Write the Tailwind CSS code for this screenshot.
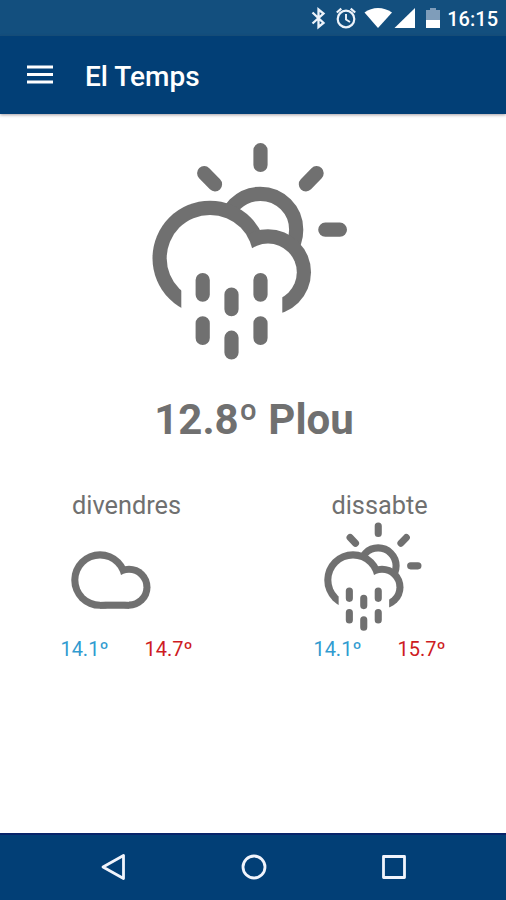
<!DOCTYPE html>
<html lang="ca">
<head>
    <meta charset="UTF-8">
    <meta name="viewport" content="width=device-width, initial-scale=1.0">
    <title>El Temps</title>
    <script src="https://cdn.jsdelivr.net/npm/@tailwindcss/browser@4"></script>
</head>
<body class="flex flex-col h-screen overflow-hidden bg-white font-['Roboto',sans-serif] text-[#707070]">
    <!-- Weather icons, shared by today and the forecast -->
    <svg class="hidden">
        <symbol id="rain" viewBox="0 0 220 240">
            <circle cx="120.300" cy="99.700" r="35.900" fill="none" stroke="currentColor" stroke-width="14.200" />
            <circle cx="70" cy="128.200" r="57.500" fill="currentColor" />
            <circle cx="128" cy="142.300" r="43" fill="currentColor" />
            <circle cx="70" cy="128.200" r="43.300" fill="white" />
            <circle cx="128" cy="142.300" r="28.800" fill="white" />
            <path d="M41.300 140H142.300V190H41.300Z" fill="white" />
            <g fill="none" stroke="currentColor" stroke-width="14.200" stroke-linecap="round">
                <path d="M120.500 20.200V34.900M64.200 43.200L75 54.300M176.600 43.200L165.900 54.300M185.300 99.700H199.900" />
                <path d="M62.700 150V164.700M120.500 150V164.700M91.500 164.500V179.200M62.700 193.300V208M120.500 193.300V208M91.500 207.700V222.400" />
            </g>
        </symbol>
        <symbol id="cloud" viewBox="0 0 220 240">
            <circle cx="70" cy="128.200" r="57.500" fill="currentColor" />
            <circle cx="128" cy="142.300" r="43" fill="currentColor" />
            <path d="M70 142H128V185.500H70Z" fill="currentColor" />
            <circle cx="70" cy="128.200" r="43.300" fill="white" />
            <circle cx="128" cy="142.300" r="28.800" fill="white" />
            <path d="M70 140H128V171.300H70Z" fill="white" />
        </symbol>
    </svg>

    <!-- Status bar -->
    <div class="flex items-center justify-end h-9 shrink-0 pr-2 bg-[#134f7e] text-white">
        <svg class="w-[137px] h-9" viewBox="310 0 137 36">
            <!-- Bluetooth -->
            <path d="M312.500 12.500L323.500 23L318.500 27V9.500L323.500 13.500L312.500 23.500" fill="none" stroke="#edf3fa" stroke-width="2.300" />
            <!-- Alarm -->
            <g fill="none" stroke="#edf3fa" stroke-width="2.200">
                <circle cx="346" cy="19" r="8.300" />
                <path d="M346 14V19.500L350 22" stroke-width="1.900" />
                <path d="M336.800 12.500L341.300 8.700M350.700 8.700L355.200 12.500" />
            </g>
            <!-- Wi-Fi -->
            <path d="M378 28L364.500 12.500Q370.500 8 378 8T392 12.500Z" fill="white" />
            <!-- Signal -->
            <path d="M394.500 28L415 8V28Z" fill="white" />
            <!-- Battery -->
            <path d="M426 20V10H430V8H436V10H440V20Z" fill="#7f9dba" />
            <path d="M426 20H440V28H426Z" fill="white" />
        </svg>
        <span class="pt-0.5 text-xl leading-9 font-medium">16:15</span>
    </div>

    <!-- App bar -->
    <div class="relative flex items-center gap-8 h-[78px] shrink-0 pl-[27px] bg-[#023f76] text-white shadow-[0_1px_3px_rgba(60,40,50,0.45)]">
        <svg class="w-[26px] h-5" viewBox="0 0 26 20">
            <path d="M0 2H26M0 9.500H26M0 17H26" stroke="white" stroke-width="3" />
        </svg>
        <h1 class="pt-1 text-[28px] font-medium">El Temps</h1>
    </div>

    <!-- Current weather -->
    <main class="flex-1">
        <div class="flex flex-col items-center pt-4">
            <svg class="w-[220px] h-60 -ml-[6px]"><use href="#rain" /></svg>
            <p class="mt-5 pl-0.5 text-[42px] leading-[60px] font-bold">12.8º Plou</p>
        </div>

        <!-- Forecast -->
        <div class="grid grid-cols-2 mt-10">
            <div class="flex flex-col items-center">
                <p class="text-[25.300px] leading-8">divendres</p>
                <svg class="w-[110px] h-[120px] mt-[-6px] -ml-[14px]"><use href="#cloud" /></svg>
                <div class="flex gap-9 mt-[-3px] text-xl leading-8">
                    <span class="text-[#319bd0]">14.1º</span>
                    <span class="text-[#ce1b22]">14.7º</span>
                </div>
            </div>
            <div class="flex flex-col items-center">
                <p class="text-[25.300px] leading-8">dissabte</p>
                <svg class="w-[110px] h-[120px] mt-[-6px] -ml-[14px]"><use href="#rain" /></svg>
                <div class="flex gap-9 mt-[-3px] text-xl leading-8">
                    <span class="text-[#319bd0]">14.1º</span>
                    <span class="text-[#ce1b22]">15.7º</span>
                </div>
            </div>
        </div>
    </main>

    <!-- Navigation bar -->
    <nav class="flex justify-between items-center h-[67px] shrink-0 px-[100px] pb-0.5 border-t-2 border-[#08246a] bg-[#023f76]">
        <svg class="w-[26px] h-7" viewBox="0 0 26 28" fill="none" stroke="#f1f4fc" stroke-width="2.800" stroke-linejoin="round">
            <path d="M23.500 2.500V25.500L3 14Z" />
        </svg>
        <svg class="w-7 h-7" viewBox="0 0 28 28" fill="none" stroke="#f1f4fc" stroke-width="2.800">
            <circle cx="14" cy="14" r="11" />
        </svg>
        <svg class="w-6 h-6" viewBox="0 0 24 24" fill="none" stroke="#f1f4fc" stroke-width="2.800" stroke-linejoin="round">
            <rect x="1.500" y="1.500" width="21" height="21" />
        </svg>
    </nav>
</body>
</html>
